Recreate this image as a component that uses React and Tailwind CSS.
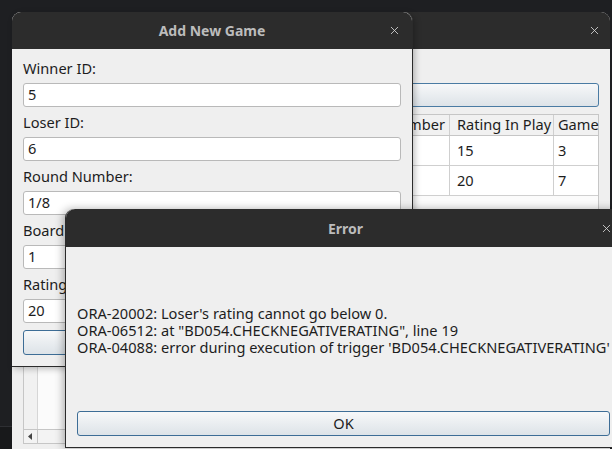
import { X } from 'lucide-react';

const font = { fontFamily: '"Noto Sans", "Open Sans", sans-serif' };

function TitleBar({ title, closeClass = '' }) {
  return (
    <div className="relative flex h-[37px] shrink-0 items-center justify-center rounded-t-[9px] bg-[#2c2c2c]">
      <span className="text-[14px] font-bold text-[#bcbcbc]">{title}</span>
      <X className={`absolute top-[12px] text-[#d4d4d4] ${closeClass}`} size={13} strokeWidth={1.6} />
    </div>
  );
}

function Field({ label, value }) {
  return (
    <div className="flex flex-col">
      <div className="flex h-[30px] items-center pt-[1px] text-[14.6px] text-[#1d1d1d]">{label}</div>
      <div className="flex h-[24px] items-center rounded-[3px] border border-[#b9b9b9] bg-white px-[4px] text-[14.6px] text-[#1d1d1d]">
        {value}
      </div>
    </div>
  );
}

// only the right-hand columns show past the dialog
const cols = [14, 150, 155, 107, 104, 47];
const header = ['', '', '', 'Round Number', 'Rating In Play', 'Game'];
const rows = [
  ['', '', '', '', '15', '3'],
  ['', '', '', '', '20', '7'],
];

function GamesTable() {
  return (
    <div className="mx-[11px] mt-[7px] flex h-[330px] flex-col border border-[#c6c6c6] bg-[#f7f7f7]">
      <div className="flex h-[21px] border-b border-[#c6c6c6] bg-[#f1f1f1]">
        {header.map((h, i) => (
          <div
            key={i}
            style={{ width: cols[i] }}
            className={`flex shrink-0 items-center whitespace-nowrap text-[14.6px] text-[#1d1d1d] ${i < 5 ? 'border-r border-[#cfcfcf]' : ''} ${i === 3 ? 'justify-end pr-[4px]' : i === 5 ? 'pl-[4px]' : 'pl-[7px]'}`}
          >
            {h}
          </div>
        ))}
      </div>
      {rows.map((r, ri) => (
        <div key={ri} className="flex h-[30px] border-b border-[#cfcfcf] bg-white">
          {r.map((c, i) => (
            <div
              key={i}
              style={{ width: cols[i] }}
              className={`flex shrink-0 items-center text-[14.6px] text-[#1d1d1d] ${i === 5 ? 'pl-[4px]' : 'pl-[7px]'} ${i < 5 ? 'border-r border-[#cfcfcf]' : ''} ${i === 0 ? 'bg-[#f1f1f1]' : ''}`}
            >
              {c}
            </div>
          ))}
        </div>
      ))}
      <div className="flex flex-1">
        <div className="w-[14px] border-r border-[#d6d6d6] bg-[#f1f1f1]" />
        <div className="flex-1 bg-[#fbfbfb]" />
      </div>
      <div className="flex h-[14px] border-t border-[#c6c6c6] bg-[#f3f3f3]">
        <div className="flex w-[14px] items-center justify-center border-r border-[#c6c6c6]">
          <svg width="5" height="7" viewBox="0 0 5 7">
            <path d="M4 0 L0 3.5 L4 7 Z" fill="#444" />
          </svg>
        </div>
      </div>
    </div>
  );
}

function Button({ children, className = '' }) {
  return (
    <div
      className={`flex items-center justify-center rounded-[3px] border border-[#3d6d96] bg-gradient-to-b from-[#f7f8f9] to-[#dde3e8] text-[14.6px] text-[#1d1d1d] ${className}`}
    >
      {children}
    </div>
  );
}

export default function App() {
  return (
    <div style={font} className="relative h-[449px] w-[612px] overflow-hidden bg-[#1e1f22]">
      <div className="absolute left-0 top-[426px] h-[23px] w-[12px] border-t border-[#2e2f33] bg-[#18191b]" />

      {/* main window behind */}
      <div className="absolute left-[12px] top-[12px] flex h-[460px] w-[598px] flex-col rounded-t-[9px] bg-[#efefef]">
        <TitleBar title="Chess Games" closeClass="right-[9px]" />
        <div className="h-[34px]" />
        <Button className="mx-[11px] h-[24px] border-[#4a7ba3]" />
        <GamesTable />
      </div>

      {/* add new game dialog */}
      <div className="absolute left-[12px] top-[12px] flex h-[355px] w-[401px] flex-col rounded-t-[9px] border-r border-b border-[#2b2b2b] bg-[#efefef] shadow-[2px_2px_6px_rgba(0,0,0,0.25)]">
        <TitleBar title="Add New Game" closeClass="right-[11px]" />
        <div className="flex flex-col px-[11px] pt-[4px]">
          <Field label="Winner ID:" value="5" />
          <Field label="Loser ID:" value="6" />
          <Field label="Round Number:" value="1/8" />
          <Field label="Board Number:" value="1" />
          <Field label="Rating In Play:" value="20" />
          <Button className="mt-[7px] h-[25px]" />
        </div>
      </div>

      {/* error dialog */}
      <div className="absolute left-[65px] top-[209px] flex h-[239px] w-[560px] flex-col rounded-t-[9px] border-b border-l border-[#2b2b2b] bg-[#efefef] shadow-[-2px_0_8px_rgba(0,0,0,0.3)]">
        <div className="relative flex h-[38px] shrink-0 items-center rounded-t-[9px] bg-[#2c2c2c]">
          <span className="absolute left-[262px] text-[14px] font-bold text-[#bcbcbc]">Error</span>
          <X className="absolute left-[534px] top-[13px] text-[#d4d4d4]" size={13} strokeWidth={1.6} />
        </div>
        <div className="flex flex-col pl-[11px] pt-[58px] text-[14.6px] leading-[17px] text-[#1d1d1d]">
          <div className="whitespace-nowrap">ORA-20002: Loser's rating cannot go below 0.</div>
          <div className="whitespace-nowrap">ORA-06512: at "BD054.CHECKNEGATIVERATING", line 19</div>
          <div className="whitespace-nowrap">ORA-04088: error during execution of trigger 'BD054.CHECKNEGATIVERATING'</div>
        </div>
        <Button className="ml-[11px] mt-[55px] h-[25px] w-[533px]">OK</Button>
      </div>
    </div>
  );
}
